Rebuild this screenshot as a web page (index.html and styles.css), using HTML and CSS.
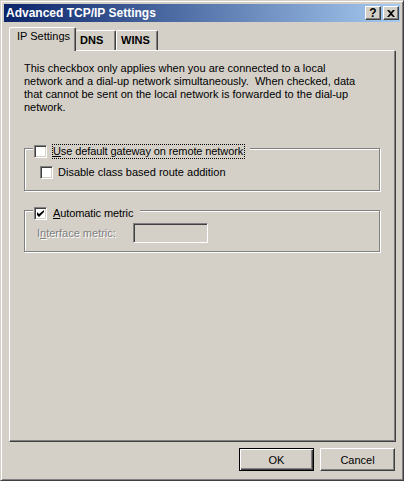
FILE: index.html
```html
<!DOCTYPE html>
<html>
<head>
<meta charset="utf-8">
<title>Advanced TCP/IP Settings</title>
<link rel="stylesheet" href="styles.css">
</head>
<body>
<div class="window">
  <div class="caption">
    <span class="title">Advanced TCP/IP Settings</span>
    <div class="cap-buttons">
      <span class="cap-btn help">?</span>
      <span class="cap-btn close"><svg width="8" height="7" viewBox="0 0 8 7"><path d="M0 0h2l2 2 2-2h2L5 3.5 8 7H6L4 5 2 7H0l3-3.5z" fill="#000"/></svg></span>
    </div>
  </div>
  <div class="client">
    <div class="tabs">
      <div class="tab active">IP Settings</div>
      <div class="tab dns">DNS</div>
      <div class="tab wins">WINS</div>
    </div>
    <div class="panel">
      <p class="note">This checkbox only applies when you are connected to a local<br>network and a dial-up network simultaneously.&nbsp; When checked, data<br>that cannot be sent on the local network is forwarded to the dial-up<br>network.</p>
      <div class="group g1">
        <div class="group-head">
          <span class="check"></span>
          <span class="label focus"><u>U</u>se default gateway on remote network</span>
        </div>
        <div class="row sub">
          <span class="check"></span>
          <span class="label">Disable class based route addition</span>
        </div>
      </div>
      <div class="group g2">
        <div class="group-head">
          <span class="check"><svg width="7" height="7" viewBox="0 0 7 7"><path d="M0 2v3l2 2 5-5V-0L2 4z" fill="#000"/></svg></span>
          <span class="label"><u>A</u>utomatic metric</span>
        </div>
        <div class="row metric">
          <span class="label disabled">I<u>n</u>terface metric:</span>
          <span class="textbox"></span>
        </div>
      </div>
    </div>
    <div class="buttons">
      <button class="btn default">OK</button>
      <button class="btn">Cancel</button>
    </div>
  </div>
</div>
</body>
</html>
```

FILE: styles.css
```css
html, body {
  margin: 0;
  padding: 0;
}
body {
  width: 404px;
  height: 481px;
  background: #D4D0C8;
  font-family: "Liberation Sans", Arial, sans-serif;
  font-size: 11px;
  line-height: 13px;
  color: #000;
}
.window {
  box-sizing: border-box;
  width: 404px;
  height: 481px;
  border: 1px solid;
  border-color: #D4D0C8 #404040 #404040 #D4D0C8;
  box-shadow: inset 1px 1px 0 #fff, inset -1px -1px 0 #808080;
  padding: 3px;
  display: flex;
  flex-direction: column;
}
.caption {
  height: 18px;
  flex: none;
  background: linear-gradient(to right, #0A246A, #A6CAF0);
  display: flex;
  align-items: center;
  padding-left: 2px;
}
.title {
  flex: 1;
  color: #fff;
  font-weight: bold;
  font-size: 12px;
}
.cap-buttons {
  display: flex;
  gap: 2px;
  margin-right: 1px;
}
.cap-btn {
  box-sizing: border-box;
  width: 16px;
  height: 14px;
  background: #D4D0C8;
  border: 1px solid;
  border-color: #fff #404040 #404040 #fff;
  box-shadow: inset -1px -1px 0 #808080;
  display: flex;
  align-items: center;
  justify-content: center;
}
.help {
  font-weight: bold;
  font-size: 12px;
  line-height: 12px;
}
.client {
  flex: 1;
  display: flex;
  flex-direction: column;
  padding: 5px 4px 0 5px;
}
.tabs {
  height: 24px;
  display: flex;
  align-items: flex-end;
  background: linear-gradient(#fff, #fff) left bottom / calc(100% - 2px) 1px no-repeat;
}
.tab {
  box-sizing: border-box;
  height: 20px;
  margin-bottom: 1px;
  padding: 3px 0 0 4px;
  border-top: 1px solid #fff;
  border-right: 1px solid #404040;
  box-shadow: inset -1px 0 0 #808080;
  border-radius: 2px 2px 0 0;
  font-weight: bold;
  white-space: nowrap;
}
.tab.active {
  width: 67px;
  height: 24px;
  margin-bottom: 0;
  padding: 2px 0 0 7px;
  border-left: 1px solid #fff;
  background: #D4D0C8;
  font-weight: normal;
}
.tab.dns {
  width: 40px;
}
.tab.wins {
  width: 42px;
  border-left: 1px solid #fff;
}
.panel {
  box-sizing: border-box;
  width: 387px;
  height: 391px;
  border-left: 1px solid #fff;
  border-right: 1px solid #404040;
  border-bottom: 1px solid #404040;
  box-shadow: inset -1px -1px 0 #808080;
  padding: 11px 15px 0 14px;
  display: flex;
  flex-direction: column;
}
.note {
  margin: 0;
}
.group {
  border: 1px solid #808080;
  box-shadow: inset 1px 1px 0 #fff, 1px 1px 0 #fff;
  display: flex;
  flex-direction: column;
  align-items: flex-start;
}
.g1 {
  margin-top: 34px;
  padding-bottom: 11px;
}
.g2 {
  margin-top: 19px;
  padding-bottom: 8px;
}
.group-head {
  height: 15px;
  margin: -5px 0 0 8px;
  padding: 0 5px 0 1px;
  background: #D4D0C8;
  display: flex;
  align-items: center;
}
.check {
  box-sizing: border-box;
  width: 13px;
  height: 13px;
  flex: none;
  background: #fff;
  border: 1px solid;
  border-color: #808080 #fff #fff #808080;
  box-shadow: inset 1px 1px 0 #404040, inset -1px -1px 0 #D4D0C8;
  display: flex;
  padding: 2px 0 0 2px;
}
.group-head .label {
  margin-left: 5px;
  border: 1px solid transparent;
  padding: 0 1px 0 0;
  letter-spacing: -0.1px;
}
.label.focus {
  border: 1px dotted #000;
}
.row {
  display: flex;
  align-items: center;
}
.row.sub {
  margin: 7px 0 0 15px;
}
.row.sub .label {
  margin-left: 5px;
}
.row.metric {
  margin: 2px 0 0 12px;
}
.label.disabled {
  width: 96px;
  color: #808080;
  text-shadow: 1px 1px 0 #fff;
}
.textbox {
  box-sizing: border-box;
  width: 75px;
  height: 20px;
  border: 1px solid;
  border-color: #808080 #fff #fff #808080;
  box-shadow: inset 1px 1px 0 #404040, inset -1px -1px 0 #D4D0C8;
  background: #D4D0C8;
}
.buttons {
  display: flex;
  justify-content: flex-end;
  gap: 6px;
  margin: 6px 1px 0 0;
}
.btn {
  box-sizing: border-box;
  width: 75px;
  height: 23px;
  padding: 0;
  background: #D4D0C8;
  font-family: "Liberation Sans", Arial, sans-serif;
  font-size: 11px;
  color: #000;
  border: 1px solid;
  border-color: #fff #404040 #404040 #fff;
  box-shadow: inset -1px -1px 0 #808080;
}
.btn.default {
  border: 1px solid #000;
  box-shadow: inset 1px 1px 0 #fff, inset -1px -1px 0 #404040, inset -2px -2px 0 #808080;
}
```
